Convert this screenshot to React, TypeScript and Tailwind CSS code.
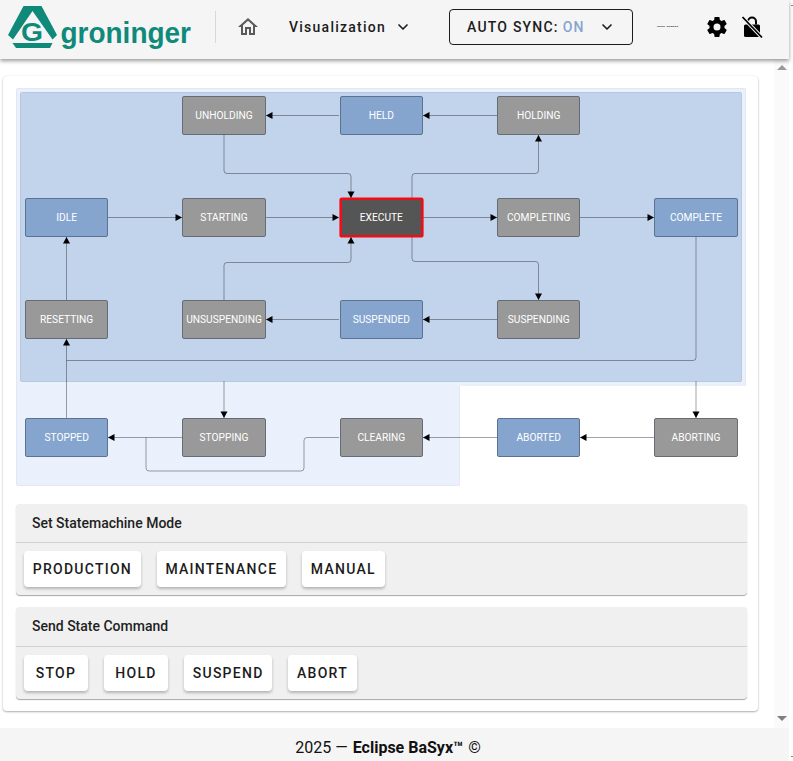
import { ChevronDown } from "lucide-react";

const nodes = [
    { label: "UNHOLDING", pos: "left-[166.33px] top-[8px]", kind: "busy" },
    { label: "HELD", pos: "left-[323.67px] top-[8px]", kind: "idle" },
    { label: "HOLDING", pos: "left-[481px] top-[8px]", kind: "busy" },
    { label: "IDLE", pos: "left-[9px] top-[110.33px]", kind: "idle" },
    { label: "STARTING", pos: "left-[166.33px] top-[110.33px]", kind: "busy" },
    { label: "EXECUTE", pos: "left-[323.67px] top-[110.33px]", kind: "active" },
    { label: "COMPLETING", pos: "left-[481px] top-[110.33px]", kind: "busy" },
    { label: "COMPLETE", pos: "left-[638.33px] top-[110.33px]", kind: "idle" },
    { label: "RESETTING", pos: "left-[9px] top-[212.33px]", kind: "busy" },
    { label: "UNSUSPENDING", pos: "left-[166.33px] top-[212.33px]", kind: "busy" },
    { label: "SUSPENDED", pos: "left-[323.67px] top-[212.33px]", kind: "idle" },
    { label: "SUSPENDING", pos: "left-[481px] top-[212.33px]", kind: "busy" },
    { label: "STOPPED", pos: "left-[9px] top-[330.33px]", kind: "idle" },
    { label: "STOPPING", pos: "left-[166.33px] top-[330.33px]", kind: "busy" },
    { label: "CLEARING", pos: "left-[323.67px] top-[330.33px]", kind: "busy" },
    { label: "ABORTED", pos: "left-[481px] top-[330.33px]", kind: "idle" },
    { label: "ABORTING", pos: "left-[638.33px] top-[330.33px]", kind: "busy" },
];

const kindClass: Record<string, string> = {
    busy: "bg-[#999999] border border-[#666c74]",
    idle: "bg-[#85a5cf] border border-[#5c7290]",
    active: "bg-[#555555] border-2 border-[#f00d16] shadow-[0_0_0_0.6px_#f00d16]",
};

const edges = [
    "M323 27.5H250",
    "M481 27.5H407",
    "M208 47V82.5Q208 85.5 211 85.5H332Q335 85.5 335 88.5V110",
    "M92 129.5H166",
    "M250 129.5H323",
    "M407 129.5H481",
    "M564 129.5H638",
    "M396 110V88.5Q396 85.5 399 85.5H519.5Q522.5 85.5 522.5 82.5V47",
    "M396 149V170.5Q396 173.5 399 173.5H519.5Q522.5 173.5 522.5 176.5V212",
    "M208 212V177.5Q208 174.5 211 174.5H332Q335 174.5 335 171.5V149",
    "M481 231.5H407",
    "M323 231.5H250",
    "M50.5 212V149",
    "M680 149V269.5Q680 272.5 677 272.5H50.5",
    "M50.5 330V251",
    "M208 293V330",
    "M680 293V330",
    "M166 349.5H92",
    "M323 349.5H291Q288 349.5 288 352.5V380Q288 383 285 383H133Q130 383 130 380V349.5",
    "M638 349.5H564",
    "M481 349.5H407",
];

const arrows = [
    "250,27.5 256.5,24 256.5,31",
    "407,27.5 413.5,24 413.5,31",
    "335,110 331.5,103.5 338.5,103.5",
    "166,129.5 159.5,126 159.5,133",
    "323,129.5 316.5,126 316.5,133",
    "481,129.5 474.5,126 474.5,133",
    "638,129.5 631.5,126 631.5,133",
    "522.5,47 519,53.5 526,53.5",
    "522.5,212 519,205.5 526,205.5",
    "335,149 331.5,155.5 338.5,155.5",
    "407,231.5 413.5,228 413.5,235",
    "250,231.5 256.5,228 256.5,235",
    "50.5,149 47,155.5 54,155.5",
    "50.5,251 47,257.5 54,257.5",
    "208,330 204.5,323.5 211.5,323.5",
    "680,330 676.5,323.5 683.5,323.5",
    "92,349.5 98.5,346 98.5,353",
    "564,349.5 570.5,346 570.5,353",
    "407,349.5 413.5,346 413.5,353",
];

function Logo() {
    return (
        <svg width="196" height="59" viewBox="0 0 196 59" className="shrink-0">
            <g fill="#0f8a7a">
                <path d="M23.5 6H41.5L57 35L52.5 39.5L32.5 11L13 39.5L8 35Z" />
                <path d="M12.5 43H52.5L50 48H16Z" />
                <text x="21" y="41" fontSize="25" fontFamily="Liberation Sans" fontWeight="700" textLength="22" lengthAdjust="spacingAndGlyphs">
                    G
                </text>
                <text x="60.5" y="43" fontSize="29" fontFamily="Liberation Sans" fontWeight="700" textLength="130.5" lengthAdjust="spacingAndGlyphs">
                    groninger
                </text>
            </g>
        </svg>
    );
}

function Panel({ title, titleClass, buttons }: { title: string; titleClass: string; buttons: string[] }) {
    return (
        <section className="bg-[#f0f0f0] rounded-[4px] shadow-[0_1px_1px_rgba(0,0,0,0.35)]">
            <div className={`flex items-center px-4 text-sm font-medium text-[#1f1f1f] border-b border-[#d2d2d2] ${titleClass}`}>
                {title}
            </div>
            <div className="flex gap-4 px-2 pt-2 pb-2">
                {buttons.map((b) => (
                    <button
                        key={b}
                        className="h-9 min-w-16 px-[8.75px] bg-white rounded-[4px] text-sm font-medium tracking-[1.25px] text-[#1c1c1c] shadow-[0_2px_3px_rgba(0,0,0,0.25)]"
                    >
                        {b}
                    </button>
                ))}
            </div>
        </section>
    );
}

export default function App() {
    return (
        <div className="w-[793px] h-[761px] flex overflow-hidden bg-white font-['Roboto',sans-serif]">
            <div className="w-[789px] h-[761px] flex flex-col">
                <header className="relative z-10 h-[59px] shrink-0 flex items-center bg-[#f5f5f5] shadow-[0_2px_4px_rgba(0,0,0,0.4)]">
                    <Logo />
                    <div className="w-px h-[32px] bg-[#d8d8d8] ml-[19px] -mt-[5px]" />
                    <div className="ml-[20px] -mt-[5px] flex items-center">
                        <svg width="24" height="24" viewBox="0 0 24 24" fill="#5a5a5a">
                            <path d="M12 5.69L17 10.19V18H15V12H9V18H7V10.19L12 5.69M12 3L2 12H5V20H11V14H13V20H19V12H22" />
                        </svg>
                        <span className="ml-[29px] text-sm font-medium tracking-[1.25px] text-[#1c1c1c]">Visualization</span>
                        <ChevronDown size={16} strokeWidth={2.5} className="ml-[9px] text-[#1c1c1c]" />
                        <div className="ml-[38px] w-[184px] h-9 flex items-center pl-[17px] border border-[#1c1c1c] rounded-[4px] text-sm font-medium tracking-[1.2px] text-[#1c1c1c]">
                            <span>AUTO SYNC:</span>
                            <span className="ml-[4px] text-[#85a5cf]">ON</span>
                            <ChevronDown size={16} strokeWidth={2.5} className="ml-[14px]" />
                        </div>
                        <span className="ml-[24px] w-[24px] text-[7px] text-[#222] whitespace-nowrap">---- ------</span>
                        <svg width="24" height="24" viewBox="0 0 24 24" fill="#000" className="ml-[24px]">
                            <path d="M12,15.5A3.5,3.5 0 0,1 8.5,12A3.5,3.5 0 0,1 12,8.5A3.5,3.5 0 0,1 15.5,12A3.5,3.5 0 0,1 12,15.5M19.43,12.97C19.47,12.65 19.5,12.33 19.5,12C19.5,11.67 19.47,11.34 19.43,11L21.54,9.37C21.73,9.22 21.78,8.95 21.66,8.73L19.66,5.27C19.54,5.05 19.27,4.96 19.05,5.05L16.56,6.05C16.04,5.66 15.5,5.32 14.87,5.07L14.5,2.42C14.46,2.18 14.25,2 14,2H10C9.75,2 9.54,2.18 9.5,2.42L9.13,5.07C8.5,5.32 7.96,5.66 7.44,6.05L4.95,5.05C4.73,4.96 4.46,5.05 4.34,5.27L2.34,8.73C2.21,8.95 2.27,9.22 2.46,9.37L4.57,11C4.53,11.34 4.5,11.67 4.5,12C4.5,12.33 4.53,12.65 4.57,12.97L2.46,14.63C2.27,14.78 2.21,15.05 2.34,15.27L4.34,18.73C4.46,18.95 4.73,19.03 4.95,18.95L7.44,17.94C7.96,18.34 8.5,18.68 9.13,18.93L9.5,21.58C9.54,21.82 9.75,22 10,22H14C14.25,22 14.46,21.82 14.5,21.58L14.87,18.93C15.5,18.67 16.04,18.34 16.56,17.94L19.05,18.95C19.27,19.03 19.54,18.95 19.66,18.73L21.66,15.27C21.78,15.05 21.73,14.78 21.54,14.63L19.43,12.97Z" />
                        </svg>
                        <svg width="24" height="24" viewBox="0 0 24 24" className="ml-[11px]">
                            <rect x="4" y="9.5" width="16" height="12.5" rx="1.5" fill="#000" />
                            <path d="M8 9.5V6.5a4 4 0 0 1 8 0V9.5" fill="none" stroke="#000" strokeWidth="2" />
                            <path d="M2.5 2L22 22.5" stroke="#f5f5f5" strokeWidth="3.6" />
                            <path d="M2.5 2L22 22.5" stroke="#000" strokeWidth="1.8" />
                        </svg>
                    </div>
                </header>

                <div className="flex-1 min-h-0 flex">
                    <main className="w-[774px] pl-[3px] pr-[16px] pt-[17px]">
                        <div className="h-[635px] bg-white rounded-[4px] pl-[13px] pr-[11px] pt-[12px] shadow-[0_1px_2px_rgba(0,0,0,0.3),0_0_2px_rgba(0,0,0,0.08)]">
                            <div className="relative h-[416px] text-white">
                                <div className="absolute left-0 top-0 w-[730px] h-[298px] bg-[#eaf1fd] rounded-t-[2px] border-t border-x border-[#e2e8f3]" />
                                <div className="absolute left-0 top-[298px] w-[444px] h-[100px] bg-[#eaf1fd] rounded-b-[2px] border-b border-r border-l border-[#e2e8f3]" />
                                <div className="absolute left-[4px] top-[4px] w-[722px] h-[290px] bg-[#c2d3ec] rounded-[2px] border border-[#b6c8e2]" />
                                <svg width="730" height="398" viewBox="0 0 730 398" className="absolute left-0 top-0">
                                    {edges.map((d) => (
                                        <path key={d} d={d} fill="none" stroke="#000" strokeOpacity="0.36" strokeWidth="1" />
                                    ))}
                                    {arrows.map((p) => (
                                        <polygon key={p} points={p} fill="#000" />
                                    ))}
                                </svg>
                                {nodes.map((n) => (
                                    <div
                                        key={n.label}
                                        className={`absolute w-[83.33px] h-[38.67px] flex items-center justify-center pt-px rounded-[2px] text-[10.2px] leading-none whitespace-nowrap ${n.pos} ${kindClass[n.kind]}`}
                                    >
                                        {n.label}
                                    </div>
                                ))}
                            </div>
                            <div className="flex flex-col gap-[12px]">
                                <Panel title="Set Statemachine Mode" titleClass="h-[39px]" buttons={["PRODUCTION", "MAINTENANCE", "MANUAL"]} />
                                <Panel title="Send State Command" titleClass="h-[40px] pb-[2px]" buttons={["STOP", "HOLD", "SUSPEND", "ABORT"]} />
                            </div>
                        </div>
                    </main>
                    <div className="w-[15px] bg-[#fafafa] flex flex-col items-center justify-between pt-[6px] pb-[7px]">
                        <div className="w-0 h-0 border-x-[5px] border-x-transparent border-b-[5px] border-b-[#9a9a9a]" />
                        <div className="w-0 h-0 border-x-[5px] border-x-transparent border-t-[5px] border-t-[#7f7f7f]" />
                    </div>
                </div>

                <footer className="h-[33px] shrink-0 flex items-center justify-center pr-[13px] pt-[7px] bg-[#f5f5f5] text-base text-[#111]">
                    2025 — <strong className="ml-[5px] mr-[5px] font-bold">Eclipse BaSyx™</strong> ©
                </footer>
            </div>
            <div className="w-[4px] flex flex-col justify-between items-end pt-[5px] pb-[4px]">
                <div className="w-[2px] h-px bg-[#8a8a8a]" />
                <div className="w-[2px] h-px bg-[#8a8a8a]" />
            </div>
        </div>
    );
}
